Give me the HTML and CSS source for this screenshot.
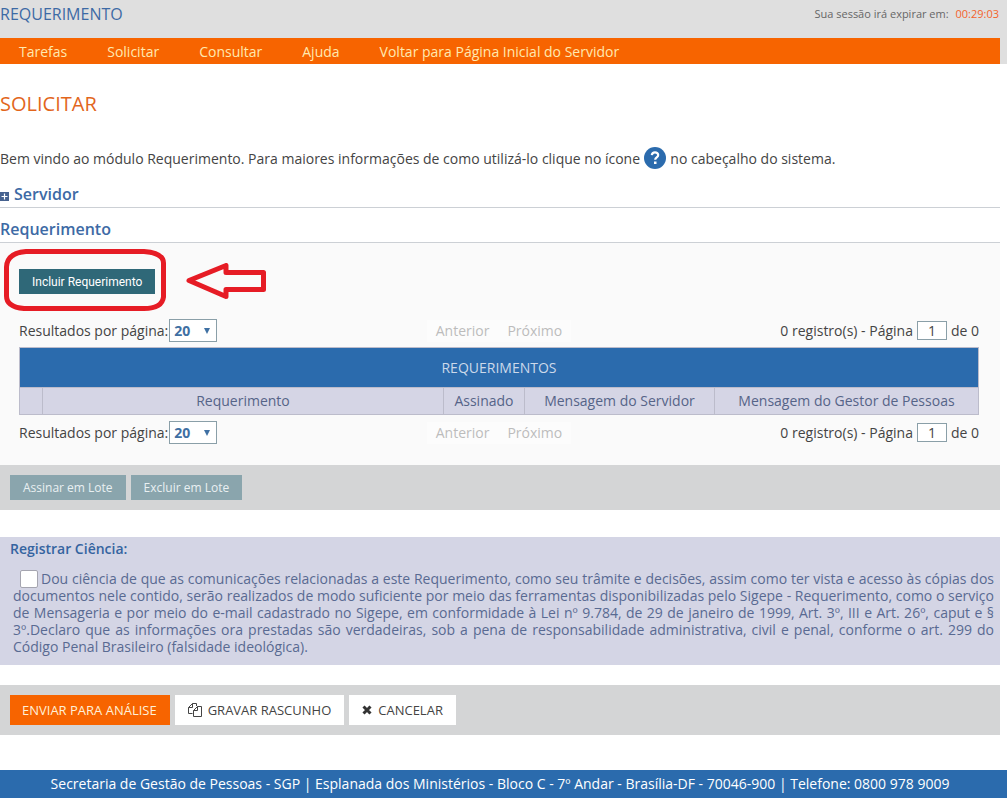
FILE: index.html
```html
<!DOCTYPE html>
<html lang="pt-BR">
<head>
<meta charset="utf-8">
<meta name="viewport" content="width=device-width, initial-scale=1">
<title>Requerimento</title>
<link rel="stylesheet" href="styles.css">
</head>
<body>
<header class="top">
  <div class="top-row">
    <span class="module">REQUERIMENTO</span>
    <span class="session">Sua sessão irá expirar em: <span class="timer">00:29:03</span></span>
  </div>
  <nav class="menu">
    <a href="#">Tarefas</a>
    <a href="#">Solicitar</a>
    <a href="#">Consultar</a>
    <a href="#">Ajuda</a>
    <a href="#">Voltar para Página Inicial do Servidor</a>
  </nav>
</header>
<main class="content">
  <h1 class="title">SOLICITAR</h1>
  <p class="welcome">Bem vindo ao módulo Requerimento. Para maiores informações de como utilizá-lo clique no ícone
    <svg class="help" viewBox="0 0 22 22" aria-hidden="true"><circle cx="11" cy="11" r="11" fill="#2b6bad"/><path d="M7.8 8.2C8 6.300 9.300 5.400 11 5.400c1.900 0 3.200 1 3.200 2.600 0 2.300-3 2.300-3 4.700" fill="none" stroke="#fff" stroke-width="2.200"/><rect x="10" y="14.500" width="2.500" height="2.500" fill="#fff"/></svg>
    no cabeçalho do sistema.</p>
  <h2 class="section">
    <svg class="plus" viewBox="0 0 9 9" aria-hidden="true"><rect width="9" height="9" fill="#46628f"/><path d="M4.500 1.500v6M1.500 4.500h6" stroke="#fff" stroke-width="1.200"/></svg>
    Servidor</h2>
  <h2 class="section">Requerimento</h2>
  <section class="panel">
    <div class="include">
      <div class="highlight-wrap">
        <button class="btn-include" type="button">Incluir Requerimento</button>
        <svg class="highlight" viewBox="0 0 162 62" aria-hidden="true"><path d="M22 2.500H140Q159.500 4 159.500 14V48Q158 59.500 140 59.500H20Q2.500 58 2.500 47V18Q3 4 22 2.500Z" fill="none" stroke="#e61c25" stroke-width="5"/></svg>
      </div>
      <svg class="arrow" viewBox="0 0 80 36" aria-hidden="true"><path d="M3 17.500L40 2.500V9.500H77.500V26.500H40V33.500Z" fill="none" stroke="#e61c25" stroke-width="5" stroke-linejoin="round"/></svg>
    </div>
    <div class="pager">
      <div class="size"><label for="size-top">Resultados por página:</label><select id="size-top"><option>20</option></select></div>
      <div class="steps"><button type="button" disabled>Anterior</button><button type="button" disabled>Próximo</button></div>
      <div class="count"><label for="page-top">0 registro(s) - Página</label><input id="page-top" type="text" value="1"><span>de 0</span></div>
    </div>
    <table class="grid">
      <colgroup><col class="c-check"><col><col class="c-sign"><col class="c-msg"><col class="c-mgr"></colgroup>
      <thead>
        <tr class="caption"><th colspan="5">REQUERIMENTOS</th></tr>
        <tr class="cols"><th></th><th>Requerimento</th><th>Assinado</th><th>Mensagem do Servidor</th><th>Mensagem do Gestor de Pessoas</th></tr>
      </thead>
    </table>
    <div class="pager">
      <div class="size"><label for="size-bottom">Resultados por página:</label><select id="size-bottom"><option>20</option></select></div>
      <div class="steps"><button type="button" disabled>Anterior</button><button type="button" disabled>Próximo</button></div>
      <div class="count"><label for="page-bottom">0 registro(s) - Página</label><input id="page-bottom" type="text" value="1"><span>de 0</span></div>
    </div>
  </section>
  <div class="bar">
    <button class="btn-batch" type="button" disabled>Assinar em Lote</button>
    <button class="btn-batch" type="button" disabled>Excluir em Lote</button>
  </div>
  <section class="notice">
    <h3>Registrar Ciência:</h3>
    <p><input id="ack" type="checkbox"><label for="ack">Dou ciência de que as comunicações relacionadas a este Requerimento, como seu trâmite e decisões, assim como ter vista e acesso às cópias dos documentos nele contido, serão realizados de modo suficiente por meio das ferramentas disponibilizadas pelo Sigepe - Requerimento, como o serviço de Mensageria e por meio do e-mail cadastrado no Sigepe, em conformidade à Lei nº 9.784, de 29 de janeiro de 1999, Art. 3º, III e Art. 26º, caput e § 3º.Declaro que as informações ora prestadas são verdadeiras, sob a pena de responsabilidade administrativa, civil e penal, conforme o art. 299 do Código Penal Brasileiro (falsidade ideológica).</label></p>
  </section>
  <div class="bar">
    <button class="btn btn-primary" type="button">ENVIAR PARA ANÁLISE</button>
    <button class="btn" type="button"><svg class="ico-copy" viewBox="0 0 14 14" aria-hidden="true"><path d="M4.500 10.500H.5V4.500L4.500.5H8.500V3M4.500.5V4.500H.5M9.500 3.500H13.500V13.500H5.500V7.500L9.500 3.500V7.500H5.500" fill="none" stroke="#444"/></svg>GRAVAR RASCUNHO</button>
    <button class="btn" type="button"><svg class="ico-x" viewBox="0 0 10 10" aria-hidden="true"><path d="M1.500 1.500l7 7M8.500 1.500l-7 7" stroke="#333" stroke-width="3"/></svg>CANCELAR</button>
  </div>
</main>
<footer class="footer">Secretaria de Gestão de Pessoas - SGP | Esplanada dos Ministérios - Bloco C - 7º Andar - Brasília-DF - 70046-900 | Telefone: 0800 978 9009</footer>
</body>
</html>
```
FILE: styles.css
```css
* { box-sizing: border-box; }
body {
  margin: 0;
  background: #fff;
  color: #444;
  font: 14px/20px "Open Sans", "Noto Sans", sans-serif;
}
button, input, select { font: inherit; margin: 0; }
button { border: 0; white-space: nowrap; }
svg { display: block; flex: none; }

.top { background: #dfdfdf; }
.top-row {
  display: flex;
  justify-content: space-between;
  align-items: flex-start;
  height: 38px;
  padding: 4px 8px 0 0;
}
.module { color: #3d6aa5; font-size: 16px; font-weight: 500; }
.session { font-size: 11px; color: #666; }
.timer { margin-left: 4px; color: #f4622c; }
.menu {
  display: flex;
  gap: 40px;
  margin-right: 7px;
  padding: 4px 19px 2px;
  background: #f76400;
}
.menu a { color: #ffe9b0; text-decoration: none; }

.content { padding-right: 7px; }
.title {
  margin: 0;
  padding: 28px 0 31px;
  color: #e2661c;
  font-size: 20px;
  line-height: 24px;
  font-weight: 500;
}
.welcome { margin: 0 0 3px; line-height: 22px; }
.help {
  display: inline-block;
  width: 22px;
  height: 22px;
  margin-right: 1px;
  vertical-align: -5px;
}
.section {
  display: flex;
  align-items: center;
  gap: 5px;
  height: 35px;
  margin: 0;
  padding-top: 8px;
  border-bottom: 1px solid #ccd0d5;
  color: #3d6aa5;
  font-size: 16px;
  font-weight: 600;
}
.plus { width: 9px; height: 9px; margin-top: 4px; }

.panel { padding: 7px 21px 22px 19px; background: #fafafa; }
.include { display: flex; align-items: center; gap: 31px; height: 62px; }
.highlight-wrap { position: relative; display: flex; }
.highlight {
  position: absolute;
  left: -15px;
  top: -20px;
  width: 162px;
  height: 62px;
  pointer-events: none;
}
.arrow { width: 80px; height: 36px; }
.btn-include {
  height: 25px;
  padding: 2px 13px 0;
  background: #2f6878;
  color: #fff;
  font: 12px/16px Roboto, sans-serif;
}

.pager {
  display: grid;
  grid-template-columns: 1fr auto 1fr;
  align-items: center;
  height: 22px;
}
.include + .pager { margin: 7px 0 6px; }
.grid + .pager { margin-top: 6px; }
.size, .count { display: flex; align-items: center; }
.size select {
  appearance: none;
  width: 48px;
  height: 23px;
  margin-left: 1px;
  padding: 0 4px;
  border: 1px solid #8a9fa8;
  border-radius: 0;
  background: #fff;
  color: #3f70a3;
  font-weight: 700;
}
.size::after {
  content: "";
  position: relative;
  margin-left: -13px;
  border: solid transparent;
  border-width: 6px 3px 0;
  border-top-color: #3f70a3;
  pointer-events: none;
}
.steps { display: flex; }
.steps button {
  height: 22px;
  padding: 0 9px;
  background: #fcfcfc;
  color: #bcbcbc;
}
.count { justify-content: flex-end; gap: 4px; }
.count input {
  width: 30px;
  height: 19px;
  padding: 0;
  border: 1px solid #8a9fa8;
  background: #fff;
  color: #444;
  text-align: center;
}

.grid { width: 100%; border-collapse: collapse; table-layout: fixed; }
.grid th { padding: 0; border: 1px solid #bcbccb; font-weight: 400; }
.caption th { height: 40px; background: #2b6bad; color: #ccd9ea; }
.cols th { height: 27px; background: #d5d5e5; color: #556488; }
.c-check { width: 23px; }
.c-sign { width: 81px; }
.c-msg { width: 190px; }
.c-mgr { width: 264px; }

.bar {
  display: flex;
  gap: 5px;
  padding: 10px;
  background: #d4d5d6;
}
.btn-batch {
  height: 25px;
  padding: 0 13px;
  background: #8aa5ad;
  color: #e9f0f2;
  font-size: 12px;
}
.notice {
  margin: 27px 0 20px;
  padding: 2px 6px 10px 10px;
  background: #d4d5e5;
  color: #596a92;
}
.notice h3 {
  margin: 0;
  color: #3564a0;
  font-size: 14px;
  line-height: 20px;
  font-weight: 600;
}
.notice p { margin: 11px 0 0 3px; line-height: 17px; text-align: justify; }
.notice input {
  appearance: none;
  width: 18px;
  height: 18px;
  margin: -6px 3px -4px 7px;
  border: 1px solid #a5a5b0;
  border-radius: 2px;
  background: #fff;
  vertical-align: middle;
}
.btn {
  display: flex;
  align-items: center;
  gap: 6px;
  height: 30px;
  padding: 0 13px;
  background: #fff;
  color: #444;
  font-size: 13px;
}
.btn-primary { padding-left: 12px; background: #f76400; color: #fff0d8; }
.ico-copy { width: 14px; height: 14px; }
.ico-x { width: 10px; height: 10px; }
.footer {
  margin-top: 35px;
  padding: 4px 15px 4px 8px;
  background: #2b6bad;
  color: #fff;
  text-align: center;
}
```
